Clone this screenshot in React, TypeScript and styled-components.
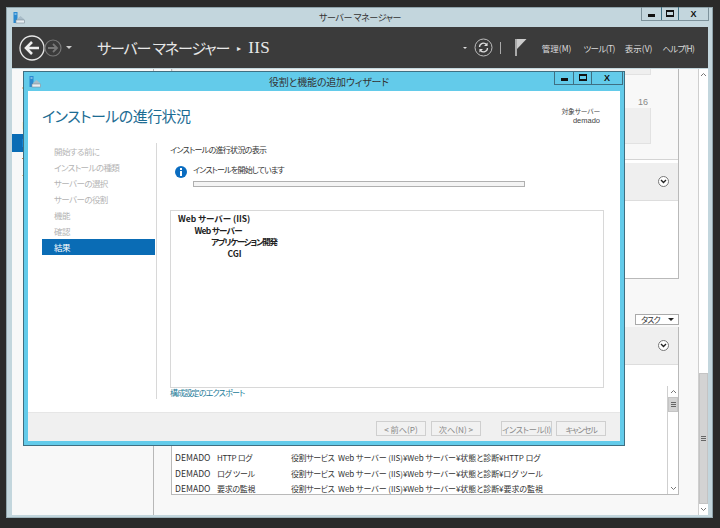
import React from 'react'
import styled, { createGlobalStyle } from 'styled-components'

const Global = createGlobalStyle`
  html, body { margin: 0; padding: 0; background: #262626; }
  body {
    width: 720px;
    height: 528px;
    overflow: hidden;
    font-family: "Noto Sans CJK JP", "Noto Sans", sans-serif;
    font-feature-settings: "palt";
  }
  * { box-sizing: border-box; }
`

const Desktop = styled.div`
  position: relative;
  width: 720px;
  height: 528px;
  padding: 7px 7px 10px 6px;
  background: #2a2a2a;
`

const ManagerWindow = styled.div`
  display: flex;
  flex-direction: column;
  height: 100%;
  padding: 0 4px 2px 5px;
  background: #c3d6dd;
  border: 1px solid #8fa3ab;
  border-bottom-color: #9fb4bc;
`

const TitleBar = styled.div<{ $shift?: number; $size: number; $spacing: number }>`
  position: relative;
  display: flex;
  flex: none;
  height: 19px;
  align-items: center;
  justify-content: center;
  padding-left: ${({ $shift }) => $shift ?? 0}px;
  font-size: ${({ $size }) => $size}px;
  letter-spacing: ${({ $spacing }) => $spacing}px;
  color: #333;
`

const TitleIcon = styled.svg<{ $left: number }>`
  position: absolute;
  left: ${({ $left }) => $left}px;
  top: 4px;
`

const Controls = styled.div<{ $right: number; $edge: string }>`
  position: absolute;
  top: -1px;
  right: ${({ $right }) => $right}px;
  display: flex;
  height: 14px;
  border: 1px solid ${({ $edge }) => $edge};
  border-top: 0;
`

const ControlButton = styled.div<{ $w: number; $edge: string }>`
  display: flex;
  width: ${({ $w }) => $w}px;
  align-items: center;
  justify-content: center;
  font-family: "Liberation Sans", sans-serif;
  font-size: 9px;
  font-weight: 700;
  letter-spacing: 0;
  color: #111;
  & + & { border-left: 1px solid ${({ $edge }) => $edge}; }
`

const Minimize = styled.i`
  width: 7px;
  height: 3px;
  margin-top: 4px;
  background: #111;
`

const Maximize = styled.i`
  width: 8px;
  height: 7px;
  border: 1px solid #111;
  border-top-width: 2px;
  border-bottom-width: 2px;
`

const NavBar = styled.header`
  display: flex;
  flex: none;
  height: 41px;
  align-items: center;
  padding: 0 14px 0 7px;
  background: #3b3b3b;
  color: #eee;
`

const Crumb = styled.div`
  display: flex;
  align-items: center;
  margin-left: 25px;
  font-size: 15px;
  letter-spacing: -1.1px;
  color: #e8e8e8;
`

const CrumbArrow = styled.span`
  margin: 0 7px 0 8px;
  font-size: 8px;
  letter-spacing: 0;
`

const CrumbLeaf = styled.b`
  font-family: "Liberation Serif", serif;
  font-size: 17px;
  font-weight: 400;
  letter-spacing: 0.4px;
`

const Spacer = styled.div`
  flex: 1;
`

const Menu = styled.span<{ $gap: number; $spacing?: number }>`
  margin-left: ${({ $gap }) => $gap}px;
  font-size: 8.5px;
  letter-spacing: ${({ $spacing }) => $spacing ?? 0}px;
  color: #ddd;
  white-space: nowrap;
`

const Divider = styled.i`
  width: 1px;
  height: 12px;
  margin: 0 13px 0 7px;
  background: #aaa;
`

const Content = styled.div`
  display: flex;
  flex: 1;
  min-height: 0;
  margin-top: 1px;
  background: #f8f8f8;
`

const Sidebar = styled.nav`
  display: flex;
  flex: none;
  flex-direction: column;
  width: 142px;
  padding-top: 10px;
  border-right: 1px solid #b8b8b8;
`

const SideItem = styled.div<{ $on?: boolean; $h?: number }>`
  flex: none;
  height: ${({ $h }) => $h ?? 18}px;
  padding-left: 10px;
  font-size: 10px;
  line-height: 18px;
  white-space: nowrap;
  background: ${({ $on }) => ($on ? '#0a6cb5' : 'transparent')};
  color: ${({ $on }) => ($on ? '#fff' : '#333')};
`

const Main = styled.main`
  display: flex;
  flex: 1;
  flex-direction: column;
  min-width: 0;
  padding-left: 17px;
`

const Panel = styled.section<{ $h: number }>`
  display: flex;
  flex: none;
  flex-direction: column;
  width: 508px;
  height: ${({ $h }) => $h}px;
  background: #fff;
  border: 1px solid #b9b9b9;
  border-top: 0;
`

const PanelTop = styled.div`
  display: flex;
  flex: none;
  flex-direction: column;
  height: 91px;
  background: #f8f8f8;
  border-bottom: 1px solid #d4d4d4;
`

const Tile = styled.div<{ $h: number }>`
  flex: none;
  width: 479px;
  height: ${({ $h }) => $h}px;
  background: #efefef;
  border: 1px solid #e2e2e2;
  border-top: 0;
`

const TileNumber = styled.div`
  display: flex;
  flex: none;
  width: 506px;
  height: 33px;
  justify-content: flex-end;
  padding: 21px 30px 0 0;
  font-family: "Liberation Sans", sans-serif;
  font-size: 9px;
  line-height: 12px;
  color: #888;
`

const SectionHead = styled.div<{ $gap?: number }>`
  display: flex;
  flex: none;
  height: 38px;
  align-items: center;
  justify-content: flex-end;
  margin-top: ${({ $gap }) => $gap ?? 0}px;
  padding-right: 9px;
  background: #efefef;
  border-bottom: 1px solid #ddd;
`

const Expander = styled.div`
  display: flex;
  width: 11px;
  height: 11px;
  align-items: center;
  justify-content: center;
  background: #fff;
  border: 1px solid #777;
  border-radius: 50%;
`

const TaskRow = styled.div`
  display: flex;
  flex: none;
  width: 508px;
  justify-content: flex-end;
  margin-top: 35px;
  margin-bottom: 2px;
`

const TaskButton = styled.div`
  display: flex;
  width: 44px;
  height: 11px;
  align-items: center;
  justify-content: space-between;
  padding: 0 4px 0 5px;
  background: #fff;
  border: 1px solid #aaa;
  font-size: 8px;
  letter-spacing: -0.8px;
  color: #333;
`

const Caret = styled.i<{ $c: string; $s: number; $ml?: number }>`
  width: 0;
  height: 0;
  margin-left: ${({ $ml }) => $ml ?? 0}px;
  border-left: ${({ $s }) => $s}px solid transparent;
  border-right: ${({ $s }) => $s}px solid transparent;
  border-top: ${({ $s }) => $s}px solid ${({ $c }) => $c};
`

const TableBody = styled.div`
  position: relative;
  display: flex;
  flex: 1;
  min-height: 0;
  overflow: hidden;
`

const Rows = styled.div`
  display: flex;
  flex: 1;
  flex-direction: column;
  justify-content: flex-end;
  margin-bottom: -3px;
`

const Row = styled.div`
  display: grid;
  grid-template-columns: 42px 74px 47px 1fr;
  height: 15.6px;
  padding-left: 3px;
  font-size: 8.6px;
  line-height: 15.6px;
  color: #333;
  white-space: nowrap;
`

const Cell = styled.span<{ $spacing?: number }>`
  font-size: 8px;
  letter-spacing: ${({ $spacing }) => $spacing ?? 0}px;
`

const Scroll = styled.div<{ $w: number; $top?: number }>`
  display: flex;
  flex: none;
  flex-direction: column;
  width: ${({ $w }) => $w}px;
  margin-top: ${({ $top }) => $top ?? 0}px;
  background: #fff;
  border-left: 1px solid #cfcfcf;
`

const ScrollArrow = styled.div`
  display: flex;
  flex: none;
  height: 11px;
  align-items: center;
  justify-content: center;
  background: #fff;
  color: #666;
`

const ScrollTrack = styled.div<{ $top: number; $h: number }>`
  flex: 1;
  padding-top: ${({ $top }) => $top}px;
  & > div { height: ${({ $h }) => $h}px; }
`

const Thumb = styled.div`
  display: flex;
  align-items: center;
  justify-content: center;
  background: #d3d3d3;
  border: 1px solid #c4c4c4;
`

const Grip = styled.i`
  width: 5px;
  height: 5px;
  background: repeating-linear-gradient(#666 0 1px, transparent 1px 2px);
`

const OuterGap = styled.div`
  flex: none;
  width: 19px;
`

const Wizard = styled.div`
  position: absolute;
  left: 23px;
  top: 71px;
  display: flex;
  flex-direction: column;
  width: 602px;
  height: 375px;
  padding: 0 4px 4px 4px;
  background: #63cbea;
  border: 1px solid #3f6f82;
`

const WizardBody = styled.div`
  display: flex;
  flex: 1;
  min-height: 0;
  flex-direction: column;
  background: #fff;
`

const WizardHead = styled.div`
  display: flex;
  flex: none;
  height: 52px;
  justify-content: space-between;
  padding: 13px 20px 0 14px;
`

const Heading = styled.h1`
  margin: 0;
  font-size: 15px;
  font-weight: 400;
  letter-spacing: -0.55px;
  line-height: 24px;
  color: #1c6c93;
`

const Target = styled.div`
  display: flex;
  flex-direction: column;
  align-items: flex-end;
  padding-top: 3px;
  color: #444;
`

const TargetLabel = styled.div`
  height: 9px;
  font-size: 6.8px;
  letter-spacing: -0.2px;
  line-height: 9px;
`

const TargetName = styled.div`
  font-family: "Liberation Sans", sans-serif;
  font-size: 7.5px;
  line-height: 9px;
`

const Columns = styled.div`
  display: flex;
  flex: 1;
  min-height: 0;
  padding: 0 16px 13px 14px;
`

const Steps = styled.div`
  display: flex;
  flex: none;
  flex-direction: column;
  width: 115px;
  padding-right: 1px;
  border-right: 1px solid #d8d8d8;
`

const Step = styled.div<{ $on?: boolean }>`
  height: 16px;
  padding-left: 12px;
  font-size: 8.5px;
  letter-spacing: -0.6px;
  line-height: 17px;
  background: ${({ $on }) => ($on ? '#0a6cb5' : 'transparent')};
  color: ${({ $on }) => ($on ? '#fff' : '#b4b4b4')};
`

const Pane = styled.div`
  display: flex;
  flex: 1;
  min-width: 0;
  flex-direction: column;
  padding-left: 13px;
`

const PaneTitle = styled.div`
  font-size: 8px;
  letter-spacing: -0.7px;
  line-height: 13px;
  color: #333;
`

const Status = styled.div`
  display: flex;
  align-items: flex-start;
  gap: 6px;
  margin: 8px 0 0 5px;
`

const StatusColumn = styled.div`
  display: flex;
  flex: 1;
  flex-direction: column;
  gap: 5px;
  padding-right: 79px;
`

const StatusText = styled.div`
  font-size: 8px;
  letter-spacing: -0.8px;
  line-height: 12px;
  color: #333;
`

const Progress = styled.div`
  height: 6px;
  background: #f4f4f4;
  border: 1px solid #b0b0b0;
`

const Tree = styled.div`
  flex: 1;
  min-height: 0;
  margin-top: 23px;
  padding: 2px 7px;
  background: #fff;
  border: 1px solid #d8d8d8;
`

const TreeLine = styled.div<{ $level: number; $spacing: number }>`
  height: 11.6px;
  padding-left: ${({ $level }) => $level * 16.5}px;
  font-size: 8.5px;
  font-weight: 700;
  letter-spacing: ${({ $spacing }) => $spacing}px;
  line-height: 11.6px;
  color: #222;
`

const ExportLink = styled.div`
  margin-top: -1px;
  font-size: 8px;
  letter-spacing: -0.8px;
  line-height: 12px;
  color: #1b7a98;
`

const Footer = styled.div`
  display: flex;
  flex: none;
  height: 29px;
  align-items: flex-start;
  justify-content: flex-end;
  padding: 8px 14px 0 0;
  background: #f0f0f0;
  border-top: 1px solid #e6e6e6;
`

const WizButton = styled.div<{ $w: number; $gap: number; $spacing?: number }>`
  display: flex;
  width: ${({ $w }) => $w}px;
  height: 15px;
  align-items: center;
  justify-content: center;
  margin-left: ${({ $gap }) => $gap}px;
  background: #f1f1f1;
  border: 1px solid #cfcfcf;
  font-size: 8.2px;
  letter-spacing: ${({ $spacing }) => $spacing ?? 0}px;
  color: #8a8a8a;
  white-space: nowrap;
`

const ForwardSvg = styled.svg`
  margin-left: -1px;
`

const RefreshSvg = styled.svg`
  margin-left: 7px;
`

const InfoSvg = styled.svg`
  flex: none;
  margin-top: 2px;
`

const ServerIcon = ({ left }: { left: number }) => (
  <TitleIcon $left={left} width="12" height="12" viewBox="0 0 12 12">
    <rect x="0.5" y="0" width="4" height="11" fill="#2b8ad0" />
    <rect x="1.5" y="1.5" width="2" height="1" fill="#cde8f8" />
    <path d="M4 10 L4 7 L7.5 4 L11 7 L11 10 Z" fill="#a8bcc8" />
    <rect x="3" y="8" width="8.5" height="3" fill="#e8eef2" stroke="#7d8e9a" strokeWidth="0.6" />
  </TitleIcon>
)

const Chevron = () => (
  <svg width="7" height="5" viewBox="0 0 7 5">
    <path d="M1 1 L3.5 3.5 L6 1" fill="none" stroke="#222" strokeWidth="1.4" />
  </svg>
)

const ArrowMark = ({ up }: { up?: boolean }) => (
  <svg width="7" height="5" viewBox="0 0 7 5">
    <path d={up ? 'M1 4 L3.5 1.5 L6 4' : 'M1 1 L3.5 3.5 L6 1'} fill="none" stroke="#777" strokeWidth="1" />
  </svg>
)

const BackIcon = () => (
  <svg width="26" height="26" viewBox="0 0 26 26">
    <circle cx="13" cy="13" r="12" fill="none" stroke="#e6e6e6" strokeWidth="1.3" />
    <path d="M20 13 H8 M13 7 L7 13 L13 19" fill="none" stroke="#eee" strokeWidth="2.6" />
  </svg>
)

const ForwardIcon = () => (
  <ForwardSvg width="18" height="18" viewBox="0 0 18 18">
    <circle cx="9" cy="9" r="8" fill="none" stroke="#777" strokeWidth="1.2" />
    <path d="M4 9 H12 M9 5 L13 9 L9 13" fill="none" stroke="#777" strokeWidth="1.8" />
  </ForwardSvg>
)

const RefreshIcon = () => (
  <RefreshSvg width="19" height="19" viewBox="0 0 19 19">
    <circle cx="9.5" cy="9.5" r="8.5" fill="none" stroke="#bdbdbd" strokeWidth="1" />
    <path d="M5.5 9 A4 4 0 0 1 12.5 6.5 M13.5 10 A4 4 0 0 1 6.5 12.5" fill="none" stroke="#ddd" strokeWidth="1.3" />
    <path d="M13.6 4.4 V8 H10 Z M5.4 14.6 V11 H9 Z" fill="#ddd" />
  </RefreshSvg>
)

const FlagIcon = () => (
  <svg width="13" height="17" viewBox="0 0 13 17">
    <rect x="1" y="0" width="2" height="17" fill="#aaa" />
    <path d="M3 0 H12.5 L3 10 Z" fill="#ccc" />
  </svg>
)

const InfoIcon = () => (
  <InfoSvg width="12" height="12" viewBox="0 0 12 12">
    <circle cx="6" cy="6" r="6" fill="#0a6cc0" />
    <rect x="5" y="2" width="2" height="2" fill="#fff" />
    <rect x="5" y="5" width="2" height="5" fill="#fff" />
  </InfoSvg>
)

const WindowButtons = ({ right, edge, widths }: { right: number; edge: string; widths: number[] }) => (
  <Controls $right={right} $edge={edge}>
    <ControlButton $w={widths[0]} $edge={edge}><Minimize /></ControlButton>
    <ControlButton $w={widths[1]} $edge={edge}><Maximize /></ControlButton>
    <ControlButton $w={widths[2]} $edge={edge}>X</ControlButton>
  </Controls>
)

const steps = ['開始する前に', 'インストールの種類', 'サーバーの選択', 'サーバーの役割', '機能', '確認', '結果']
const tree = [
  { label: 'Web サーバー (IIS)', spacing: 0 },
  { label: 'Web サーバー', spacing: -0.7 },
  { label: 'アプリケーション開発', spacing: -1.3 },
  { label: 'CGI', spacing: 0 },
]
const rows = ['HTTP ログ', 'ログ ツール', '要求の監視']

export default function App() {
  return (
    <Desktop>
      <Global />
      <ManagerWindow>
        <TitleBar $size={9} $spacing={-0.4}>
          <ServerIcon left={1} />
          サーバー マネージャー
          <WindowButtons right={-1} edge="#7d929b" widths={[19, 17, 30]} />
        </TitleBar>
        <NavBar>
          <BackIcon />
          <ForwardIcon />
          <Caret $c="#ccc" $s={3} $ml={4} />
          <Crumb>
            サーバー マネージャー
            <CrumbArrow>▸</CrumbArrow>
            <CrumbLeaf>IIS</CrumbLeaf>
          </Crumb>
          <Spacer />
          <Caret $c="#ddd" $s={2.5} />
          <RefreshIcon />
          <Divider />
          <FlagIcon />
          <Menu $gap={15}>管理(M)</Menu>
          <Menu $gap={12} $spacing={-0.6}>ツール(T)</Menu>
          <Menu $gap={10}>表示(V)</Menu>
          <Menu $gap={10} $spacing={-0.8}>ヘルプ(H)</Menu>
        </NavBar>
        <Content>
          <Sidebar>
            <SideItem>ダ</SideItem>
            <SideItem $h={19} />
            <SideItem>ロ</SideItem>
            <SideItem $on>IIS</SideItem>
            <SideItem>す</SideItem>
            <SideItem>フ</SideItem>
          </Sidebar>
          <Main>
            <Panel $h={210}>
              <PanelTop>
                <Tile $h={6} />
                <TileNumber>16</TileNumber>
                <Tile $h={36} />
              </PanelTop>
              <SectionHead $gap={3}>
                <Expander><Chevron /></Expander>
              </SectionHead>
            </Panel>
            <TaskRow>
              <TaskButton>
                タスク
                <Caret $c="#222" $s={3} />
              </TaskButton>
            </TaskRow>
            <Panel $h={168}>
              <SectionHead>
                <Expander><Chevron /></Expander>
              </SectionHead>
              <TableBody>
                <Rows>
                  {rows.map(name => (
                    <Row key={name}>
                      <span>DEMADO</span>
                      <Cell $spacing={-0.3}>{name}</Cell>
                      <Cell $spacing={-0.4}>役割サービス</Cell>
                      <Cell $spacing={-0.05}>Web サーバー (IIS)¥Web サーバー¥状態と診断¥{name}</Cell>
                    </Row>
                  ))}
                </Rows>
                <Scroll $w={11} $top={21}>
                  <ScrollArrow><ArrowMark up /></ScrollArrow>
                  <ScrollTrack $top={0} $h={15}>
                    <Thumb><Grip /></Thumb>
                  </ScrollTrack>
                  <ScrollArrow><ArrowMark /></ScrollArrow>
                </Scroll>
              </TableBody>
            </Panel>
          </Main>
          <OuterGap />
          <Scroll $w={10}>
            <ScrollArrow><ArrowMark up /></ScrollArrow>
            <ScrollTrack $top={293} $h={131}>
              <Thumb><Grip /></Thumb>
            </ScrollTrack>
            <ScrollArrow><ArrowMark /></ScrollArrow>
          </Scroll>
        </Content>
      </ManagerWindow>

      <Wizard>
        <TitleBar $shift={10} $size={10} $spacing={-0.2}>
          <ServerIcon left={1} />
          役割と機能の追加ウィザード
          <WindowButtons right={-3} edge="#3f6f82" widths={[18, 18, 31]} />
        </TitleBar>
        <WizardBody>
          <WizardHead>
            <Heading>インストールの進行状況</Heading>
            <Target>
              <TargetLabel>対象サーバー</TargetLabel>
              <TargetName>demado</TargetName>
            </Target>
          </WizardHead>
          <Columns>
            <Steps>
              {steps.map((s, i) => (
                <Step key={s} $on={i === steps.length - 1}>{s}</Step>
              ))}
            </Steps>
            <Pane>
              <PaneTitle>インストールの進行状況の表示</PaneTitle>
              <Status>
                <InfoIcon />
                <StatusColumn>
                  <StatusText>インストールを開始しています</StatusText>
                  <Progress />
                </StatusColumn>
              </Status>
              <Tree>
                {tree.map((t, i) => (
                  <TreeLine key={t.label} $level={i} $spacing={t.spacing}>{t.label}</TreeLine>
                ))}
              </Tree>
              <ExportLink>構成設定のエクスポート</ExportLink>
            </Pane>
          </Columns>
          <Footer>
            <WizButton $w={50} $gap={0}>&lt; 前へ(P)</WizButton>
            <WizButton $w={50} $gap={5}>次へ(N) &gt;</WizButton>
            <WizButton $w={51} $gap={20} $spacing={-0.3}>インストール(I)</WizButton>
            <WizButton $w={50} $gap={4} $spacing={-1.2}>キャンセル</WizButton>
          </Footer>
        </WizardBody>
      </Wizard>
    </Desktop>
  )
}
